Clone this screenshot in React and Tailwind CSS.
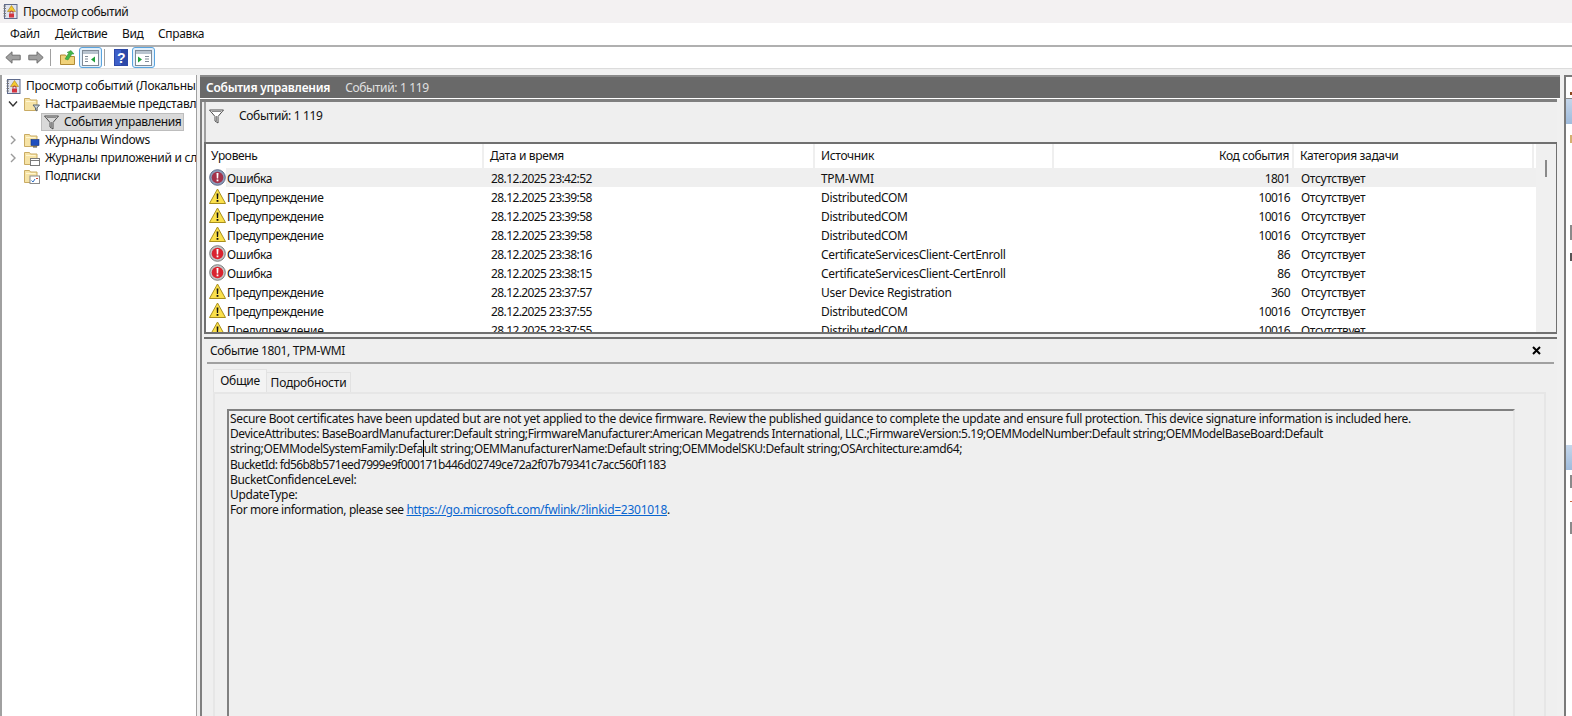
import React from 'react';

const rows = [
  { level: 'error', date: '28.12.2025 23:42:52', source: 'TPM-WMI', code: '1801' },
  { level: 'warn', date: '28.12.2025 23:39:58', source: 'DistributedCOM', code: '10016' },
  { level: 'warn', date: '28.12.2025 23:39:58', source: 'DistributedCOM', code: '10016' },
  { level: 'warn', date: '28.12.2025 23:39:58', source: 'DistributedCOM', code: '10016' },
  { level: 'error', date: '28.12.2025 23:38:16', source: 'CertificateServicesClient-CertEnroll', code: '86' },
  { level: 'error', date: '28.12.2025 23:38:15', source: 'CertificateServicesClient-CertEnroll', code: '86' },
  { level: 'warn', date: '28.12.2025 23:37:57', source: 'User Device Registration', code: '360' },
  { level: 'warn', date: '28.12.2025 23:37:55', source: 'DistributedCOM', code: '10016' },
  { level: 'warn', date: '28.12.2025 23:37:55', source: 'DistributedCOM', code: '10016' },
];

const ErrorIcon = ({ selected }) => (
  <svg width="17" height="17" viewBox="0 0 17 17" className="shrink-0">
    <circle cx="8.5" cy="8.5" r="7.800" fill={selected ? '#8c9cba' : '#c4c4c4'} stroke={selected ? '#5f6c88' : '#7d7d7d'} strokeWidth="1" />
    <circle cx="8.5" cy="8.5" r="5.800" fill={selected ? '#a3324a' : '#d9232e'} />
    <path d="M7.500 4h2l-.3 5.500h-1.400z" fill="#fff" />
    <rect x="7.600" y="10.500" width="1.800" height="1.800" fill="#fff" />
  </svg>
);

const WarnIcon = () => (
  <svg width="17" height="17" viewBox="0 0 17 17" className="shrink-0">
    <path d="M8.500 1 16.500 15.500H.5z" fill="#fbe04c" stroke="#a88f1c" strokeWidth="1" strokeLinejoin="round" />
    <path d="M7.600 5.500h1.800l-.3 5.500h-1.200z" fill="#111" />
    <rect x="7.600" y="12" width="1.800" height="1.800" fill="#111" />
  </svg>
);

const LogIcon = () => (
  <svg width="15" height="15" viewBox="0 0 15 15" className="shrink-0">
    <rect x="1.500" y="0.500" width="12.500" height="14" fill="#dfe3ee" stroke="#5f6b8c" />
    <path d="M.5 2h2.500M.5 4.500h2.500M.5 7h2.500M.5 9.500h2.500M.5 12h2.500" stroke="#777" />
    <path d="M8.500 1.500 12.500 7.500H4.500z" fill="#f4c92f" stroke="#a5821a" strokeWidth="0.600" />
    <rect x="6" y="9.500" width="5" height="4" rx="0.500" fill="#d3343f" />
    <path d="M7 9.500V8.500a1.500 1.500 0 0 1 3 0v1" fill="none" stroke="#b03040" />
  </svg>
);

const Folder = ({ children }) => (
  <svg width="16" height="15" viewBox="0 0 16 15" className="shrink-0">
    <path d="M.5 13.500V1.500h5l1 1.500h6.500v10.500z" fill="#f6e3a6" stroke="#c9ab63" />
    <path d="M2 4.500h9.500" stroke="#fff6d2" />
    {children}
  </svg>
);

const Funnel = ({ size = 15, fill = '#d8d8d8' }) => (
  <svg width={size} height={size} viewBox="0 0 15 15" className="shrink-0">
    <path d="M.5 1h14L9 7.500v6.500L6 12V7.500z" fill={fill} stroke="#4d4d4d" strokeLinejoin="round" />
    <path d="M3 2.500h9M7.500 7v5.500" stroke="#8a8a8a" />
  </svg>
);

const PaneIcon = ({ right }) => (
  <svg width="17" height="16" viewBox="0 0 17 16">
    <rect x="0.500" y="0.500" width="16" height="15" fill="#fff" stroke="#7f8a96" />
    <rect x="1" y="1" width="15" height="3" fill="#b9c4cf" />
    {right ? (
      <>
        <path d="M3 6.500v6l4-3z" fill="#1fa03a" />
        <path d="M10 6.500h4M10 9h4M10 11.500h4" stroke="#7f8a96" />
      </>
    ) : (
      <>
        <path d="M3 6.500h3M3 9h3M3 11.500h3" stroke="#7f8a96" />
        <path d="M13 6.500v6l-4-3z" fill="#1fa03a" />
      </>
    )}
  </svg>
);

const Arrow = ({ flip }) => (
  <svg width="16" height="13" viewBox="0 0 16 13" className={flip ? 'shrink-0 -scale-x-100' : 'shrink-0'}>
    <path d="M.8 6.500 7 .8v3.400h8.200v4.600H7v3.400z" fill="#a0a0a0" stroke="#6f6f6f" strokeLinejoin="round" />
  </svg>
);

const ToolToggle = ({ right }) => (
  <div className="flex h-[21px] w-[23px] shrink-0 items-center justify-center rounded-[3px] border border-[#5aa4de] bg-[#e3f0fb]">
    <PaneIcon right={right} />
  </div>
);

const TreeRow = ({ pad, chevron, icon, label, selected }) => (
  <div className="flex h-[18px] items-center whitespace-nowrap" style={{ paddingLeft: pad }}>
    {chevron === 'open' && (
      <svg width="10" height="8" viewBox="0 0 10 8" className="mr-[6px] shrink-0">
        <path d="M1 1.500 5 6l4-4.500" fill="none" stroke="#333" strokeWidth="1.400" />
      </svg>
    )}
    {chevron === 'closed' && (
      <svg width="10" height="10" viewBox="0 0 10 10" className="mr-[6px] shrink-0">
        <path d="M3 1l4 4-4 4" fill="none" stroke="#9a9a9a" strokeWidth="1.400" />
      </svg>
    )}
    {selected ? (
      <div className="flex h-[18px] w-[143px] items-center border border-[#bdbdbd] bg-[#d9d9d9] pl-[2px]">
        {icon}
        <span className="ml-[5px]">{label}</span>
      </div>
    ) : (
      <>
        {icon}
        <span className="ml-[5px] tracking-[-0.25px]">{label}</span>
      </>
    )}
  </div>
);

const Tree = () => (
  <div className="h-full w-[197px] shrink-0 overflow-hidden border-r border-l-2 border-[#a0a0a0] bg-white pt-[2px]">
    <TreeRow pad={4} icon={<LogIcon />} label="Просмотр событий (Локальный)" />
    <TreeRow
      pad={6}
      chevron="open"
      icon={
        <Folder>
          <path d="M9 8h6.500l-2.500 3v3l-1.500-1v-2z" fill="#cfd6dc" stroke="#5d6870" />
        </Folder>
      }
      label="Настраиваемые представления"
    />
    <TreeRow pad={39} icon={<Funnel fill="#d8d8d8" />} label="События управления" selected />
    <TreeRow
      pad={6}
      chevron="closed"
      icon={
        <Folder>
          <rect x="7" y="6.500" width="8" height="6" fill="#1f4fbf" stroke="#12307a" strokeWidth="0.600" />
          <path d="M9 14h4" stroke="#444" />
        </Folder>
      }
      label="Журналы Windows"
    />
    <TreeRow
      pad={6}
      chevron="closed"
      icon={
        <Folder>
          <rect x="6.500" y="7.500" width="9" height="7" fill="#fff" stroke="#7a7a7a" />
          <path d="M7 9.500h8" stroke="#7a7a7a" />
        </Folder>
      }
      label="Журналы приложений и служб"
    />
    <TreeRow
      pad={22}
      icon={
        <Folder>
          <rect x="6" y="7" width="9.500" height="7.500" fill="#fff" stroke="#8a8a8a" />
          <path d="M7.500 11.500l1.500 1.500 2-3" fill="none" stroke="#2d6fc4" />
          <path d="M12 9.500h2" stroke="#c9453c" />
        </Folder>
      }
      label="Подписки"
    />
  </div>
);

const HeaderCell = ({ className, children }) => (
  <div className={`flex h-full shrink-0 items-center border-r-2 border-[#efefef] ${className}`}>{children}</div>
);

const EventList = () => (
  <div className="flex h-[192px] shrink-0 overflow-hidden border-2 border-r-[1px] border-[#707070] bg-white">
    <div className="w-[1330px] shrink-0">
      <div className="flex h-[24px] items-center">
        <HeaderCell className="w-[278px] pl-[5px]">Уровень</HeaderCell>
        <HeaderCell className="w-[331px] pl-[6px]">Дата и время</HeaderCell>
        <HeaderCell className="w-[239px] pl-[6px]">Источник</HeaderCell>
        <HeaderCell className="w-[240px] justify-end pr-[3px]">Код события</HeaderCell>
        <HeaderCell className="w-[240px] pl-[6px]">Категория задачи</HeaderCell>
      </div>
      {rows.map((row, i) => (
        <div key={i} className="flex h-[19px] shrink-0 items-center whitespace-nowrap">
          <div className="flex w-[279px] shrink-0 items-center pl-[3px]">
            {row.level === 'error' ? <ErrorIcon selected={i === 0} /> : <WarnIcon />}
            <span className={`flex h-[19px] flex-1 items-center pt-[2px] pl-[1px] ${i === 0 ? 'bg-[#efefef]' : ''}`}>
              {row.level === 'error' ? 'Ошибка' : 'Предупреждение'}
            </span>
          </div>
          <div className={`flex h-[19px] w-[1051px] shrink-0 items-center pt-[2px] ${i === 0 ? 'bg-[#efefef]' : ''}`}>
            <div className="w-[330px] shrink-0 pl-[6px] tracking-[-0.6px]">{row.date}</div>
            <div className="w-[239px] shrink-0 pl-[6px] tracking-[-0.3px]">{row.source}</div>
            <div className="w-[236px] shrink-0 text-right tracking-[-0.55px]">{row.code}</div>
            <div className="pl-[11px]">Отсутствует</div>
          </div>
        </div>
      ))}
    </div>
    <div className="flex flex-1 justify-center bg-[#f0f0f0] pt-[16px]">
      <div className="h-[17px] w-[2px] bg-[#8a8a8a]" />
    </div>
  </div>
);

const EventDetails = () => (
  <div className="flex min-h-0 flex-1 flex-col overflow-hidden border-t-2 border-[#707070] bg-[#efefef]">
    <div className="flex h-[23px] shrink-0 items-center justify-between pr-[16px] pl-[6px]">
      <span>Событие 1801, TPM-WMI</span>
      <svg width="9" height="9" viewBox="0 0 9 9">
        <path d="M1 1l7 7M8 1 1 8" stroke="#000" strokeWidth="2" />
      </svg>
    </div>
    <div className="mr-[3px] ml-[3px] h-[2px] shrink-0 bg-[#a0a0a0]" />
    <div className="mt-[5px] flex h-[23px] shrink-0 items-end pl-[9px]">
      <div className="flex h-[23px] w-[54px] items-center justify-center border-x border-t border-[#e2e2e2] bg-[#f3f3f3]">Общие</div>
      <div className="flex h-[20px] w-[84px] items-center justify-center border-t border-r border-[#e2e2e2] tracking-[-0.2px]">Подробности</div>
    </div>
    <div className="mr-[11px] ml-[9px] flex-1 border-x-2 border-t-2 border-[#e6e6e6] pt-[15px] pr-[29px] pl-[12px]">
      <div className="h-[400px] border-t-2 border-r-2 border-l-2 border-t-[#808080] border-r-[#e6e6e6] border-l-[#808080] pl-px leading-[15.2px] whitespace-nowrap">
        <div className="tracking-[-0.355px]">
          Secure Boot certificates have been updated but are not yet applied to the device firmware. Review the published guidance to complete the update and ensure full protection. This device signature information is included here.
        </div>
        <div className="tracking-[-0.43px]">
          DeviceAttributes: BaseBoardManufacturer:Default string;FirmwareManufacturer:American Megatrends International, LLC.;FirmwareVersion:5.19;OEMModelNumber:Default string;OEMModelBaseBoard:Default
        </div>
        <div className="tracking-[-0.39px]">
          string;OEMModelSystemFamily:Defa<span className="border-l border-black" />ult string;OEMManufacturerName:Default string;OEMModelSKU:Default string;OSArchitecture:amd64;
        </div>
        <div className="tracking-[-0.64px]">BucketId: fd56b8b571eed7999e9f000171b446d02749ce72a2f07b79341c7acc560f1183</div>
        <div>BucketConfidenceLevel:</div>
        <div>UpdateType:</div>
        <div className="tracking-[-0.41px]">
          For more information, please see <span className="tracking-[-0.27px] text-[#0a66d0] underline">https://go.microsoft.com/fwlink/?linkid=2301018</span>.
        </div>
      </div>
    </div>
  </div>
);

const ActionsPane = () => (
  <div className="ml-[4px] flex h-full flex-1 flex-col overflow-hidden border-t-2 border-l-2 border-[#7a7a7a] bg-white">
    <div className="flex h-[22px] shrink-0 items-end justify-end border-b border-[#8a8a8a] pb-[3px]">
      <div className="h-[3px] w-[2px] bg-[#8a4a20]" />
    </div>
    <div className="h-[25px] shrink-0 bg-gradient-to-b from-[#c5d6ea] to-[#9ebbdc]" />
    <div className="flex h-[321px] shrink-0 flex-col items-end pt-[11px]">
      <div className="h-[8px] w-[2px] bg-[#d4b070]" />
      <div className="mt-[82px] h-[15px] w-[2px] bg-[#8a8a8a]" />
      <div className="mt-[13px] h-[8px] w-[2px] bg-[#555]" />
    </div>
    <div className="h-[25px] shrink-0 bg-gradient-to-b from-[#c5d6ea] to-[#9ebbdc]" />
    <div className="flex flex-col items-end pt-[5px]">
      <div className="h-[13px] w-[2px] bg-[#8a8a8a]" />
      <div className="mt-[13px] h-px w-[2px] bg-[#c9633c]" />
      <div className="mt-[20px] h-[12px] w-[2px] bg-[#8a8a8a]" />
    </div>
  </div>
);

export default function App() {
  return (
    <div className="flex h-[716px] w-[1572px] flex-col overflow-hidden bg-[#f0f0f0] font-['Noto_Sans',sans-serif] text-[12px] text-[#111] tracking-[-0.35px]">
      <div className="flex h-[23px] shrink-0 items-center bg-[#f3f1f2] pl-[3px]">
        <LogIcon />
        <span className="ml-[5px]">Просмотр событий</span>
      </div>
      <div className="flex h-[24px] shrink-0 items-center border-b-2 border-b-[#b0b0b0] bg-white pl-[10px]">
        <span className="w-[45px]">Файл</span>
        <span className="w-[67px]">Действие</span>
        <span className="w-[36px]">Вид</span>
        <span>Справка</span>
      </div>
      <div className="flex h-[22px] shrink-0 items-center border-b border-[#dcdcdc] bg-white pl-[5px]">
        <Arrow />
        <div className="w-[7px]" />
        <Arrow flip />
        <div className="mx-[6px] h-[17px] w-px bg-[#a0a0a0]" />
        <svg width="16" height="16" viewBox="0 0 16 16" className="ml-[3px] shrink-0">
          <path d="M.5 14.500V5h5l1 1.500h8v8z" fill="#f0d27a" stroke="#b08a35" />
          <path d="M5 9 9 2.500 7 2.500 11 .5l3 3.500h-2L8 10z" fill="#43b649" stroke="#2c8a35" strokeWidth="0.500" />
        </svg>
        <div className="ml-[3px]">
          <ToolToggle />
        </div>
        <div className="mx-[2px] h-[17px] w-px bg-[#a0a0a0]" />
        <svg width="14" height="17" viewBox="0 0 14 17" className="ml-[7px] shrink-0">
          <rect width="14" height="17" fill="#2c48a8" />
          <rect x="1" y="1" width="6" height="15" fill="#3d5fc8" />
          <text x="7" y="14" textAnchor="middle" fontSize="14" fontWeight="700" fill="#fff" fontFamily="Liberation Sans">?</text>
        </svg>
        <div className="ml-[4px]">
          <ToolToggle right />
        </div>
      </div>
      <div className="flex min-h-0 flex-1 pt-[6px]">
        <Tree />
        <div className="ml-[3px] flex h-full w-[1360px] shrink-0 flex-col">
          <div className="flex h-[23px] shrink-0 items-center border-t-2 border-[#8a8a8a] bg-[#696969] pl-[6px] text-white">
            <span className="font-semibold tracking-[-0.25px]">События управления</span>
            <span className="ml-[15px] text-[#e0e0e0]">Событий: 1 119</span>
          </div>
          <div className="h-px shrink-0 bg-white" />
          <div className="mr-[3px] flex min-h-0 flex-1 flex-col border-t-[3px] border-l-[2px] border-[#7f7f7f]">
            <div className="flex min-h-0 flex-1 flex-col border-l-[2px] border-[#efefef]">
              <div className="h-[40px] shrink-0 border-l-[2px] border-[#a0a0a0] bg-[#efefef]">
                <div className="flex items-center pt-[5px] pl-[3px]">
                  <Funnel size={15} fill="#fff" />
                  <span className="ml-[15px]">Событий: 1 119</span>
                </div>
              </div>
              <EventList />
              <div className="h-[3px] shrink-0 bg-[#f0f0f0]" />
              <EventDetails />
            </div>
          </div>
        </div>
        <ActionsPane />
      </div>
    </div>
  );
}
